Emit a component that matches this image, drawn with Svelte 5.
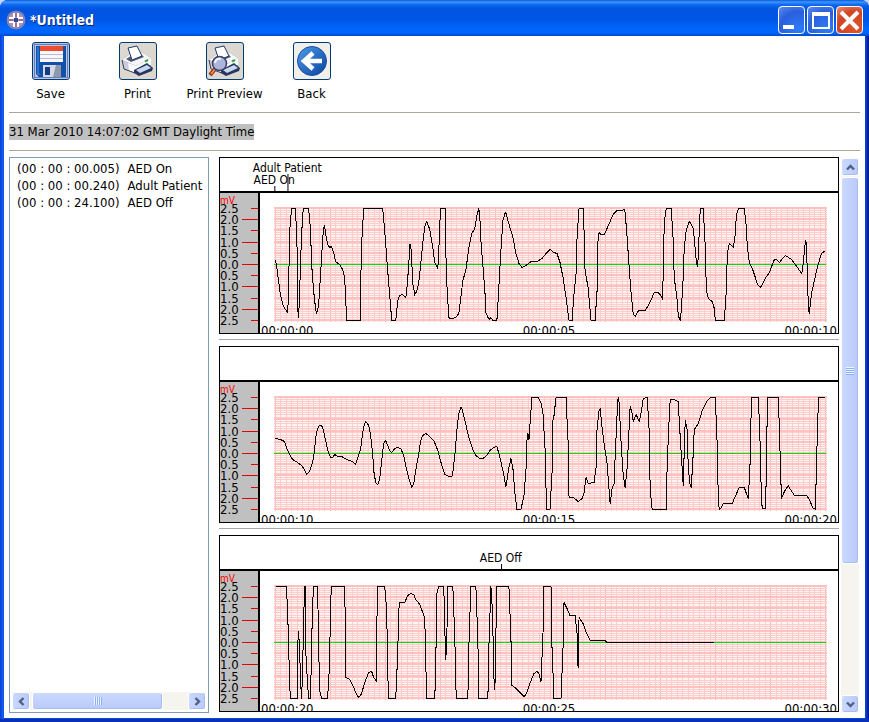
<script>
  const actions = ['Save', 'Print', 'Print Preview', 'Back'];

  const events = [
    { time: '(00 : 00 : 00.005)', label: 'AED On' },
    { time: '(00 : 00 : 00.240)', label: 'Adult Patient' },
    { time: '(00 : 00 : 24.100)', label: 'AED Off' }
  ];

  const scale = ['2.5', '2.0', '1.5', '1.0', '0.5', '0.0', '0.5', '1.0', '1.5', '2.0', '2.5'];

  // ten seconds per strip, 552 units wide; 1 = +2.5 mV, 57 = 0, 113 = -2.5 mV
  const strips = [
    {
      times: ['00:00:00', '00:00:05', '00:00:10'],
      marks: [
        { at: 0.05, label: 'AED On', high: false },
        { at: 2.4, label: 'Adult Patient', high: true }
      ],
      wave: `1,53 2,58 4,73 6,88 9,99 13,105 14,90 15,26 17,1 21,1 23,53 23,100 24,110 25,90 26,53 28,8 29,1 34,1
        36,23 37,56 39,83 41,101 42,106 44,98 46,66 48,33 49,21 50,18 51,26 53,37 55,40 57,39 59,45 61,54 65,57
        68,62 70,70 71,90 72,113 86,113 86,76 87,36 89,1 108,1 110,23 112,50 114,76 116,100 117,113 121,113
        123,93 125,88 127,87 129,88 131,90 132,83 134,58 135,37 136,37 137,53 138,76 140,87 142,84 144,75
        146,56 148,36 150,19 152,14 155,22 158,40 160,55 163,61 164,43 165,16 166,1 171,1 171,43 172,76
        174,110 175,111 178,111 181,110 184,106 186,90 188,73 191,63 194,40 197,26 200,21 202,8 204,1 205,10
        206,33 208,58 210,83 211,105 213,110 215,112 216,110 218,113 222,113 223,96 226,43 228,13 230,6 231,5
        233,13 238,30 241,46 244,56 247,60 251,58 256,54 262,54 267,51 271,46 275,42 279,45 282,46 285,55
        288,70 291,90 293,106 294,113 297,113 299,86 301,66 302,30 304,1 308,1 309,23 310,63 313,80 316,113
        320,113 322,83 323,30 324,25 326,27 329,27 331,23 335,14 338,7 342,3 346,3 349,2 350,5 352,30 354,60
        356,86 358,106 360,109 362,105 364,103 370,103 373,98 377,90 379,85 383,85 385,87 387,91 388,70
        389,16 391,1 396,1 398,33 399,70 402,93 403,108 405,113 406,103 408,70 409,40 411,23 414,14 416,17
        418,21 419,31 421,53 422,59 423,50 424,23 425,1 428,1 430,40 431,80 432,88 434,92 437,94 439,101
        440,113 449,113 451,83 452,46 454,36 455,37 458,40 460,26 461,8 463,1 469,1 471,20 472,40 474,55
        477,61 480,70 482,77 485,80 488,75 491,69 494,65 497,57 499,52 501,52 504,55 507,51 510,48 513,50
        516,52 519,56 522,60 526,66 527,63 529,43 530,33 531,36 532,70 533,103 534,105 536,86 540,68 543,56
        546,46 550,43`
    },
    {
      times: ['00:00:10', '00:00:15', '00:00:20'],
      marks: [],
      wave: `1,42 6,43 10,45 12,51 15,58 18,63 23,66 27,69 30,73 32,78 35,75 38,66 40,54 41,41 43,32 45,29 47,29
        49,34 51,44 54,57 56,61 58,61 60,58 63,60 67,60 72,63 78,65 81,68 83,62 86,52 88,36 90,27 91,25 94,29
        96,39 98,57 99,74 101,86 103,88 105,83 107,64 109,47 111,44 113,49 115,54 117,56 120,52 123,51 126,52
        129,59 131,69 134,82 137,91 139,87 141,74 144,57 146,44 148,39 151,37 154,39 159,44 163,54 165,62
        168,72 170,78 174,80 177,80 178,76 180,59 182,34 184,17 186,11 187,12 190,24 194,41 198,53 201,59
        205,62 208,62 212,59 215,54 219,51 222,50 225,61 228,74 231,90 234,71 236,62 238,72 240,97 242,113
        246,113 249,99 251,74 252,44 253,37 254,43 256,14 257,1 263,1 266,6 268,17 270,51 271,91 272,113
        275,113 277,77 278,24 279,19 281,1 291,1 293,44 294,101 298,101 301,103 303,105 307,102 309,96 311,81
        313,87 319,86 321,71 322,31 324,14 325,12 327,31 329,47 332,67 334,94 335,107 337,92 339,87 340,61
        342,17 343,1 344,6 346,47 348,77 350,91 352,71 354,31 355,10 357,17 358,25 361,18 364,25 366,16 368,2
        372,1 374,34 375,94 377,113 391,113 392,67 394,21 395,3 399,3 403,5 404,24 406,57 408,89 409,54
        410,24 412,34 413,71 415,90 416,91 418,57 419,33 423,27 427,14 432,4 435,1 440,1 442,51 443,104
        444,113 446,111 448,107 457,107 459,102 464,91 469,91 471,97 473,102 475,61 476,1 483,1 485,54
        486,104 487,112 490,112 491,77 492,1 503,1 505,67 506,102 509,95 513,89 515,93 519,99 531,99 534,103
        537,111 540,113 541,67 543,1 550,1`
    },
    {
      times: ['00:00:20', '00:00:25', '00:00:30'],
      marks: [{ at: 41, label: 'AED Off', high: false }],
      wave: `1,1 12,1 14,52 15,98 16,113 23,113 23,62 24,46 25,62 26,95 27,113 28,88 29,38 30,1 31,1 31,62 33,98
        34,113 36,113 37,62 38,20 39,1 43,1 44,55 45,105 47,113 53,113 55,78 56,15 57,1 70,1 71,55 71,92 75,94
        79,102 82,109 84,112 87,108 90,97 94,87 97,86 99,92 102,96 102,45 103,1 110,1 112,25 113,88 114,113
        121,113 123,68 124,25 125,17 130,17 133,10 136,8 139,9 141,14 145,19 148,27 150,33 151,78 152,113
        160,113 161,78 162,8 164,1 169,1 170,45 171,74 172,52 173,1 178,1 180,52 181,102 182,113 193,113
        194,62 196,1 201,1 203,55 204,113 213,113 214,62 216,1 217,15 218,45 219,92 220,104 221,48 222,1
        234,1 236,52 237,100 240,102 244,106 249,111 251,109 255,98 259,88 262,86 264,88 266,96 268,48 269,1
        276,1 277,62 279,113 286,113 288,62 289,17 292,23 295,30 300,30 302,48 303,82 304,32 308,38 311,47
        315,55 330,55 332,57 439,57`
    }
  ];

  const fineRows = Array.from({ length: 51 }, (_, i) => 1 + i * 2.24);
  const fineCols = Array.from({ length: 101 }, (_, i) => 1 + i * 5.5);
</script>

{#snippet printer()}
  <path d="M3 18 10 13 24 11 32 16V24L18 32 5 27Z" fill="#7a8096" />
  <path d="M3 18 17 24 32 16 24 11 10 13Z" fill="#f7f7fa" />
  <path d="M3 18 17 24 16 31 5 27Z" fill="#c9ccda" />
  <path d="M9 21 17 24 32 16V23L17 31 10 29Z" fill="#fbfbfd" />
  <path d="M3 18 5 27 16 31" fill="none" stroke="#3b4058" />
  <path d="M7 17 12 14 23 13 25 15 12 20Z" fill="#555b72" />
  <path d="M9 6 18 4 23 14 13 18Z" fill="#fff" stroke="#1e3a70" />
  <path d="M15 28 28 21 34 26 33 29 20 34 15 31Z" fill="#26375f" />
  <path d="M17 28 28 23 32 26 21 31Z" fill="#ccd6ee" />
  <path d="M26 19.5 29 18" stroke="#2eac3a" stroke-width="2" />
{/snippet}

{#snippet arrow(d)}
  <svg viewBox="0 0 9 9" width="9" height="9" aria-hidden="true">
    <path {d} fill="none" stroke="#4d6185" stroke-width="2.4" />
  </svg>
{/snippet}

<div class="window">
  <header>
    <svg class="logo" viewBox="0 0 20 20" aria-hidden="true">
      <circle cx="10" cy="10" r="9.5" fill="#7f83b8" />
      <circle cx="10" cy="10" r="7.5" fill="#a897b8" />
      <path d="M8 3V8H3M12 3V8H17M3 12H8V17M17 12H12V17" fill="none" stroke="#fff" stroke-width="2" />
      <path d="M10 3V7M10 13V17M3 10H7M13 10H17" stroke="#b0557c" stroke-width="1.4" />
      <rect x="8" y="8" width="4" height="4" fill="#334a9c" />
    </svg>
    <h1>*Untitled</h1>
    <button class="caption" aria-label="Minimize">
      <svg viewBox="0 0 25 25"><path d="M4 19H15" stroke="#fff" stroke-width="4" /></svg>
    </button>
    <button class="caption" aria-label="Maximize">
      <svg viewBox="0 0 25 25">
        <path d="M4 6H22" stroke="#fff" stroke-width="4" />
        <path d="M5 5V20H21V5" fill="none" stroke="#fff" stroke-width="2" />
      </svg>
    </button>
    <button class="caption close" aria-label="Close">
      <svg viewBox="0 0 25 25"><path d="M4 4 21 21M21 4 4 21" stroke="#fff" stroke-width="4" /></svg>
    </button>
  </header>

  <main>
    <nav>
      {#each actions as action, i}
        <button class="tool">
          <span class="icon" class:save={i === 0}>
            <svg viewBox="1 1 36 36" width="36" height="36" aria-hidden="true">
              {#if i === 0}
                <rect x="2.5" y="2.5" width="33" height="33" fill="#b5c5e8" stroke="#1a347c" stroke-dasharray="1 1" />
                <path d="M4 4H34V35H7L4 32Z" fill="#124fa8" />
                <path d="M5 5H7V31L9 33H5Z" fill="#2875d0" />
                <rect x="8" y="4" width="23" height="16" fill="#f8f8fc" />
                <rect x="8" y="4" width="23" height="5" fill="#ee4b30" />
                <path d="M8 12.5H31M8 16.5H31" stroke="#b9bdd0" />
                <rect x="11" y="23" width="18" height="12" fill="#d6d9e3" />
                <rect x="13" y="25" width="5" height="8" fill="#123c80" />
                <path d="M24 23H29V35H21Z" fill="#8e98ad" />
              {:else if i === 1}
                {@render printer()}
              {:else if i === 2}
                {@render printer()}
                <path d="M9 27 4 33" stroke="#8d3213" stroke-width="4" />
                <path d="M9 27 5 32" stroke="#f38b54" stroke-width="2" />
                <circle cx="13.5" cy="21.5" r="7" fill="#aeb5dc" stroke="#3c4265" stroke-width="1.5" />
                <path d="M9 21Q10 16 15 17" fill="none" stroke="#f4f6ff" stroke-width="2" />
              {:else}
                <defs>
                  <linearGradient id="ball" x1="0" y1="0" x2="1" y2="1">
                    <stop offset="0" stop-color="#4d9bea" />
                    <stop offset="1" stop-color="#0844a0" />
                  </linearGradient>
                </defs>
                <circle cx="19" cy="19" r="14.5" fill="url(#ball)" stroke="#1c4c9c" />
                <path d="M20 11 11 19 20 27M12 19H29" fill="none" stroke="#fff" stroke-width="4.5" />
              {/if}
            </svg>
          </span>
          {action}
        </button>
      {/each}
    </nav>

    <div class="date"><time>31 Mar 2010 14:07:02 GMT Daylight Time</time></div>

    <div class="panes">
      <section class="list">
        <ul>
          {#each events as event}
            <li><span>{event.time}</span>{event.label}</li>
          {/each}
        </ul>
        <div class="scroll across">
          <button aria-label="Scroll left">{@render arrow('M6.5 1 3 4.5 6.5 8')}</button>
          <div class="thumb"><i></i></div>
          <button aria-label="Scroll right">{@render arrow('M2.5 1 6 4.5 2.5 8')}</button>
        </div>
      </section>

      <section class="charts">
        {#each strips as strip}
          <article>
            <div class="marks">
              <div class="track">
                {#each strip.marks as mark}
                  <span class="mark" class:high={mark.high} style="left: {mark.at}%">{mark.label}</span>
                {/each}
              </div>
            </div>
            <div class="body">
              <div class="axis">
                <div class="unit">mV</div>
                <ol>
                  {#each scale as value, i}
                    <li>{value}<i class:long={i % 2 === 1}></i></li>
                  {/each}
                </ol>
              </div>
              <div class="plot">
                <svg viewBox="0 0 552 115" preserveAspectRatio="none" role="img" aria-label="ECG {strip.times[0]}">
                  <g shape-rendering="crispEdges">
                    <rect width="552" height="115" fill="#fff4f2" />
                    {#each fineCols as x, i}
                      <line x1={x} x2={x} y1="0" y2="115" stroke={i % 10 === 0 ? '#ffb4b4' : '#ffcaca'} />
                    {/each}
                    {#each fineRows as y, i}
                      <line x1="0" x2="552" y1={y} y2={y} stroke={i % 5 === 0 ? '#ffc0c0' : '#ffcccc'} stroke-width={i % 5 === 0 ? 2 : 1} />
                    {/each}
                    <rect y="57" width="551" height="1" fill="#00e000" />
                  </g>
                  <polyline class="wave" points={strip.wave} transform="translate(0.5 0.5)" />
                </svg>
                <div class="times">
                  {#each strip.times as time}<span>{time}</span>{/each}
                </div>
              </div>
            </div>
          </article>
        {/each}
      </section>

      <div class="scroll down">
        <button aria-label="Scroll up">{@render arrow('M1 6.5 4.5 3 8 6.5')}</button>
        <div class="thumb"><i></i></div>
        <button aria-label="Scroll down">{@render arrow('M1 2.5 4.5 6 8 2.5')}</button>
      </div>
    </div>
  </main>
</div>

<style>
  :global(body) {
    margin: 0;
    background: #c5d5ee;
  }

  .window {
    box-sizing: border-box;
    display: flex;
    flex-direction: column;
    height: 100vh;
    padding: 0 4px 4px;
    border-radius: 8px 8px 0 0;
    background: linear-gradient(90deg, #0a3ad8, #1464f4 3px, #0848dc 4px, #0848dc calc(100% - 4px), #0a3cc8 calc(100% - 3px), #00138c);
    box-shadow: inset 0 -3px #0a30b8;
    color: #000;
    font: 13px/17px "DejaVu Sans Condensed", "DejaVu Sans", sans-serif;
    overflow: hidden;
  }

  button {
    padding: 0;
    border: 0;
    background: none;
    color: inherit;
    font: inherit;
  }

  svg {
    display: block;
  }

  ul, ol {
    margin: 0;
    padding: 0;
    list-style: none;
  }

  header {
    flex: none;
    display: flex;
    align-items: center;
    gap: 2px;
    height: 36px;
    margin: 0 -4px;
    padding: 4px 6px 0;
    box-sizing: border-box;
    background: linear-gradient(#0a58d8, #3d95ff 2px, #0a66f0 5px, #0054e0 9px, #0056e6 20px, #0066fc 28px, #0064fa 33px, #0048c8);
  }

  .logo {
    width: 20px;
    height: 20px;
  }

  h1 {
    flex: 1;
    margin: 0 0 0 2px;
    color: #fff;
    font-size: 14px;
    text-shadow: 1px 1px #0a246a;
  }

  .caption {
    width: 27px;
    height: 28px;
    border: 1px solid #fff;
    border-radius: 4px;
    background: radial-gradient(circle at 75% 85%, #2d7cf8, #2a5fdc 60%, #5d8cf0);
  }

  .close {
    background: radial-gradient(circle at 70% 80%, #e0542a, #d04424 60%, #ee9070);
  }

  main {
    flex: 1;
    display: flex;
    flex-direction: column;
    min-height: 0;
    padding: 0 5px 5px;
    background: #fff;
  }

  nav {
    display: flex;
    margin: 0 0 0 -2px;
    padding: 6px 0 10px;
  }

  .tool {
    display: flex;
    flex-direction: column;
    align-items: center;
    gap: 5px;
    width: 87px;
  }

  .icon {
    border: 1px solid #003c74;
    border-radius: 3px;
    background: #dcd8d0;
  }

  .icon.save {
    background: #b5c5e8;
  }

  .tool:last-child .icon {
    background: #f0efea;
  }

  .date {
    padding: 11px 0 10px;
    border-top: 1px solid #aca899;
    border-bottom: 1px solid #aca899;
    line-height: 16px;
  }

  time {
    display: inline-block;
    background: #c0c0c0;
  }

  .panes {
    flex: 1;
    display: flex;
    min-height: 0;
    padding-top: 6px;
  }

  .list {
    box-sizing: border-box;
    display: flex;
    flex: none;
    flex-direction: column;
    justify-content: space-between;
    width: 200px;
    margin-right: 10px;
    padding: 2px;
    border: 1px solid #7f9db9;
  }

  .list li {
    display: flex;
    gap: 8px;
    padding-left: 5px;
    white-space: nowrap;
  }

  .charts {
    flex: 1;
    min-width: 0;
    overflow: hidden;
  }

  article {
    box-sizing: border-box;
    height: 177px;
    border: 1px solid #000;
  }

  /* rule between two strips */
  article + article {
    position: relative;
    margin-top: 12px;
  }

  article + article::before {
    content: "";
    position: absolute;
    top: -8px;
    right: -1px;
    left: -1px;
    border-top: 1px solid #a8a8a8;
  }

  .marks {
    height: 33px;
    padding: 0 11px 0 54px;
    border-bottom: 2px solid #000;
  }

  .track {
    position: relative;
    height: 33px;
  }

  .mark {
    position: absolute;
    bottom: 5px;
    font-size: 12px;
    line-height: 12px;
    white-space: nowrap;
    transform: translateX(-50%);
  }

  .mark.high {
    bottom: 17px;
  }

  .mark::after {
    content: "";
    position: absolute;
    top: 12px;
    left: 50%;
    height: 5px;
    border-left: 1px solid #000;
  }

  .mark.high::after {
    height: 17px;
  }

  .body {
    display: flex;
    height: 140px;
    overflow: hidden;
  }

  .axis {
    width: 38px;
    border-right: 2px solid #000;
    background: #c0c0c0;
  }

  .unit {
    height: 10px;
    color: #f00;
    font-size: 10px;
    line-height: 16px;
  }

  ol {
    display: flex;
    flex-direction: column;
    height: 123px;
  }

  ol li {
    flex: 1;
    display: flex;
    align-items: center;
    justify-content: space-between;
    line-height: 11px;
  }

  ol i {
    width: 7px;
    border-top: 1px solid #e00000;
  }

  ol i.long {
    width: 16px;
  }

  .plot {
    flex: 1;
    padding-top: 14px;
  }

  .plot svg {
    box-sizing: border-box;
    width: 100%;
    height: 115px;
    padding: 0 11px 0 14px;
  }

  .wave {
    fill: none;
    stroke: #000;
    stroke-width: 1;
    shape-rendering: crispEdges;
    vector-effect: non-scaling-stroke;
  }

  .times {
    display: flex;
    justify-content: space-between;
    padding: 0 1px;
  }

  .scroll {
    display: flex;
    gap: 1px;
    background: #f5f4ee;
  }

  .scroll button,
  .thumb {
    box-sizing: border-box;
    display: flex;
    align-items: center;
    justify-content: center;
    border: 1px solid #fff;
    border-radius: 3px;
    background: linear-gradient(90deg, #cbd9ff, #b9cafa);
    box-shadow: inset -1px -1px #a9bdf0;
  }

  .scroll button {
    flex: none;
    width: 18px;
    height: 18px;
  }

  .across {
    height: 18px;
  }

  .across .thumb {
    width: 131px;
    margin: 0 auto 0 1px;
    background: linear-gradient(#cbd9ff, #b9cafa);
  }

  .down {
    flex-direction: column;
    width: 18px;
    margin: 1px 1px 0 2px;
  }

  .down .thumb {
    height: 387px;
    margin-bottom: auto;
  }

  .thumb i {
    width: 8px;
    height: 8px;
    background: repeating-linear-gradient(#eef4ff 0 1px, #8cb0f8 1px 2px);
  }

  .across .thumb i {
    background: repeating-linear-gradient(90deg, #eef4ff 0 1px, #8cb0f8 1px 2px);
  }
</style>
